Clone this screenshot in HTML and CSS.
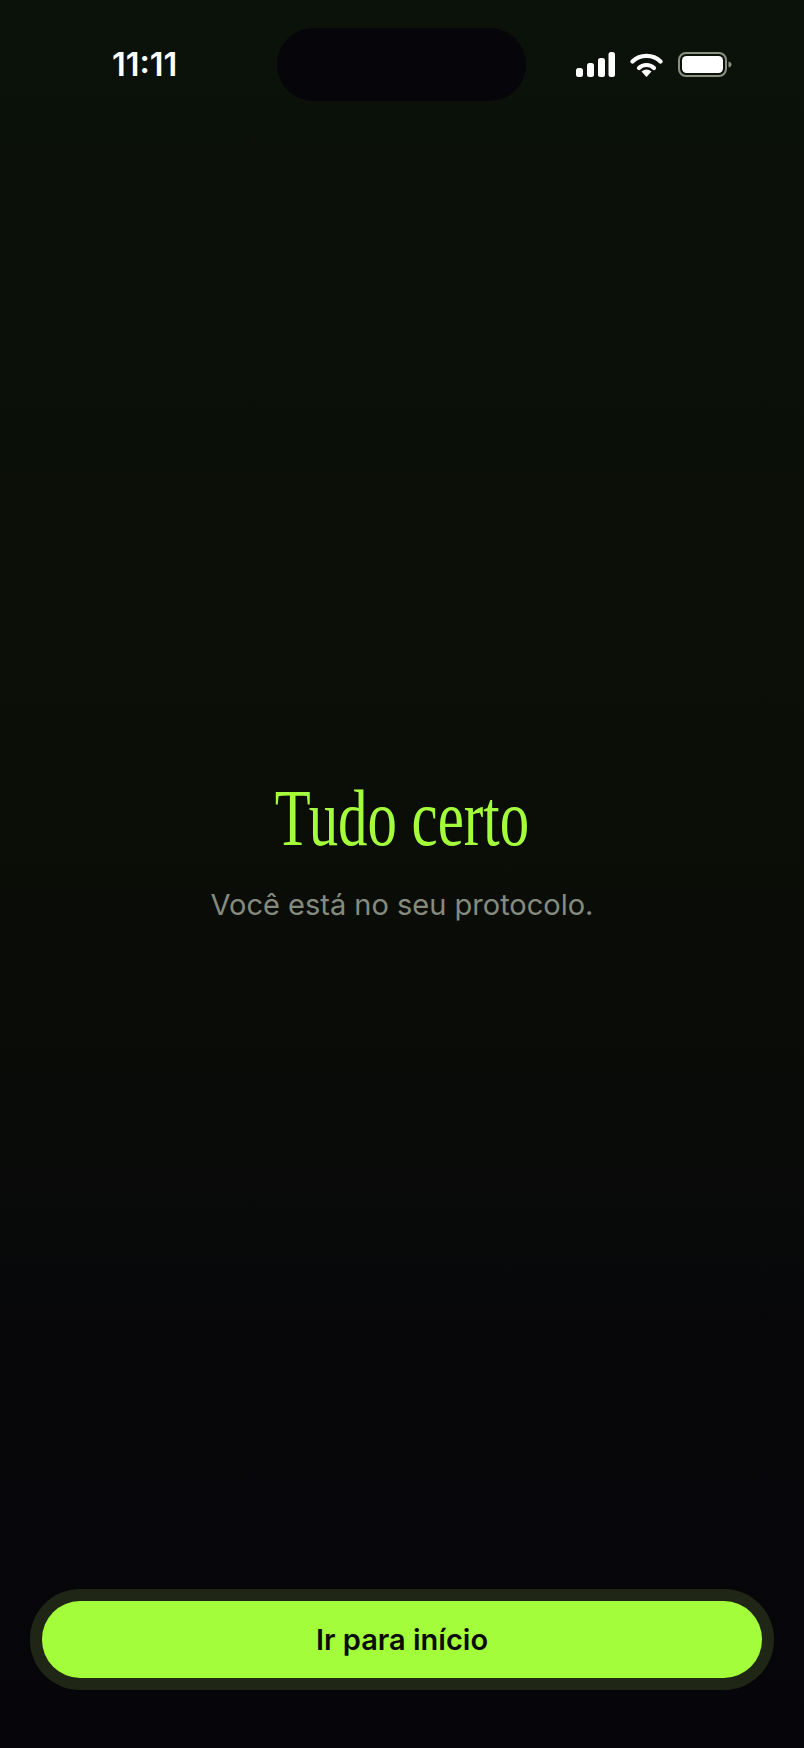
FILE: index.html
```html
<!DOCTYPE html>
<html lang="pt-BR">
<head>
<meta charset="utf-8">
<title>Tudo certo</title>
<link rel="stylesheet" href="styles.css">
</head>
<body>
<div class="screen">
  <header class="status">
    <span class="time">11:11</span>
    <div class="island"></div>
    <div class="icons">
      <svg class="signal" viewBox="0 0 39 25" width="39" height="25"><rect x="0" y="16" width="7" height="9" rx="2.5"/><rect x="11" y="11" width="7" height="14" rx="2.5"/><rect x="22" y="6" width="7" height="19" rx="2.5"/><rect x="32.500" y="0" width="6.500" height="25" rx="2.500"/></svg>
      <svg class="wifi" viewBox="0 0 33 25" width="33" height="25"><path d="M2.500 9.500C10 2 23 2 30.500 9.500" fill="none" stroke="#fff" stroke-width="4.200" stroke-linecap="round"/><path d="M9 16C13 12 20 12 24 16" fill="none" stroke="#fff" stroke-width="4.200" stroke-linecap="round"/><path d="M11.500 19.500Q16.500 15.500 21.500 19.500L16.500 25Z" fill="#fff"/></svg>
      <svg class="battery" viewBox="0 0 55 25" width="55" height="25"><rect x="1" y="1" width="47" height="23" rx="7" fill="none" stroke="#8b9180" stroke-width="2"/><rect x="4" y="4" width="41" height="17" rx="4.500" fill="#fff"/><path d="M50.500 9.500C52.500 10 53.500 11 53.500 12.500S52.500 15 50.500 15.500Z" fill="#8b9180"/></svg>
    </div>
  </header>
  <main class="content">
    <h1 class="title">Tudo certo</h1>
    <p class="subtitle">Você está no seu protocolo.</p>
  </main>
  <footer class="footer">
    <div class="button-ring">
      <button class="button" type="button">Ir para início</button>
    </div>
  </footer>
</div>
</body>
</html>
```
FILE: styles.css
```css
* { box-sizing: border-box; }
html, body { margin: 0; padding: 0; }
body { width: 804px; height: 1748px; overflow: hidden; background: #06060a; }
.screen {
  width: 804px;
  height: 1748px;
  display: flex;
  flex-direction: column;
  background: linear-gradient(180deg, #0b120a 0%, #0b0f08 30%, #0a0d07 55%, #07070a 78%, #06060a 100%);
}
.status {
  height: 101px;
  padding: 28px 71px 0 112px;
  display: flex;
  justify-content: space-between;
  align-items: flex-start;
}
.time {
  width: 165px;
  margin-right: 0;
  font: 600 32.500px/1 Inter, sans-serif;
  color: #fff;
  padding-top: 21px;
}
.island { width: 250px; height: 73px; border-radius: 37px; background: #05050a; }
.icons { display: flex; gap: 15px; padding-top: 24px; margin-left: 50px; }
.icons svg { display: block; fill: #fff; }
.content {
  flex: 1;
  display: flex;
  flex-direction: column;
  align-items: center;
  padding-top: 677px;
}
.title {
  margin: 0;
  font: 400 80px/80px "Liberation Serif", serif;
  color: #a4fd3a;
  transform: scaleX(.735);
  white-space: nowrap;
}
.subtitle {
  margin: 0;
  padding-top: 27px;
  font: 400 29px/40px Inter, sans-serif;
  color: #858b7e;
}
.footer { padding: 0 30px 58px; }
.button-ring { padding: 12px; border-radius: 50px; background: #1f2615; }
.button {
  display: block;
  width: 100%;
  height: 77px;
  border: 0;
  border-radius: 38px;
  background: #a4fd3a;
  color: #0a0c05;
  font: 600 29px/1 Inter, sans-serif;
}
```
